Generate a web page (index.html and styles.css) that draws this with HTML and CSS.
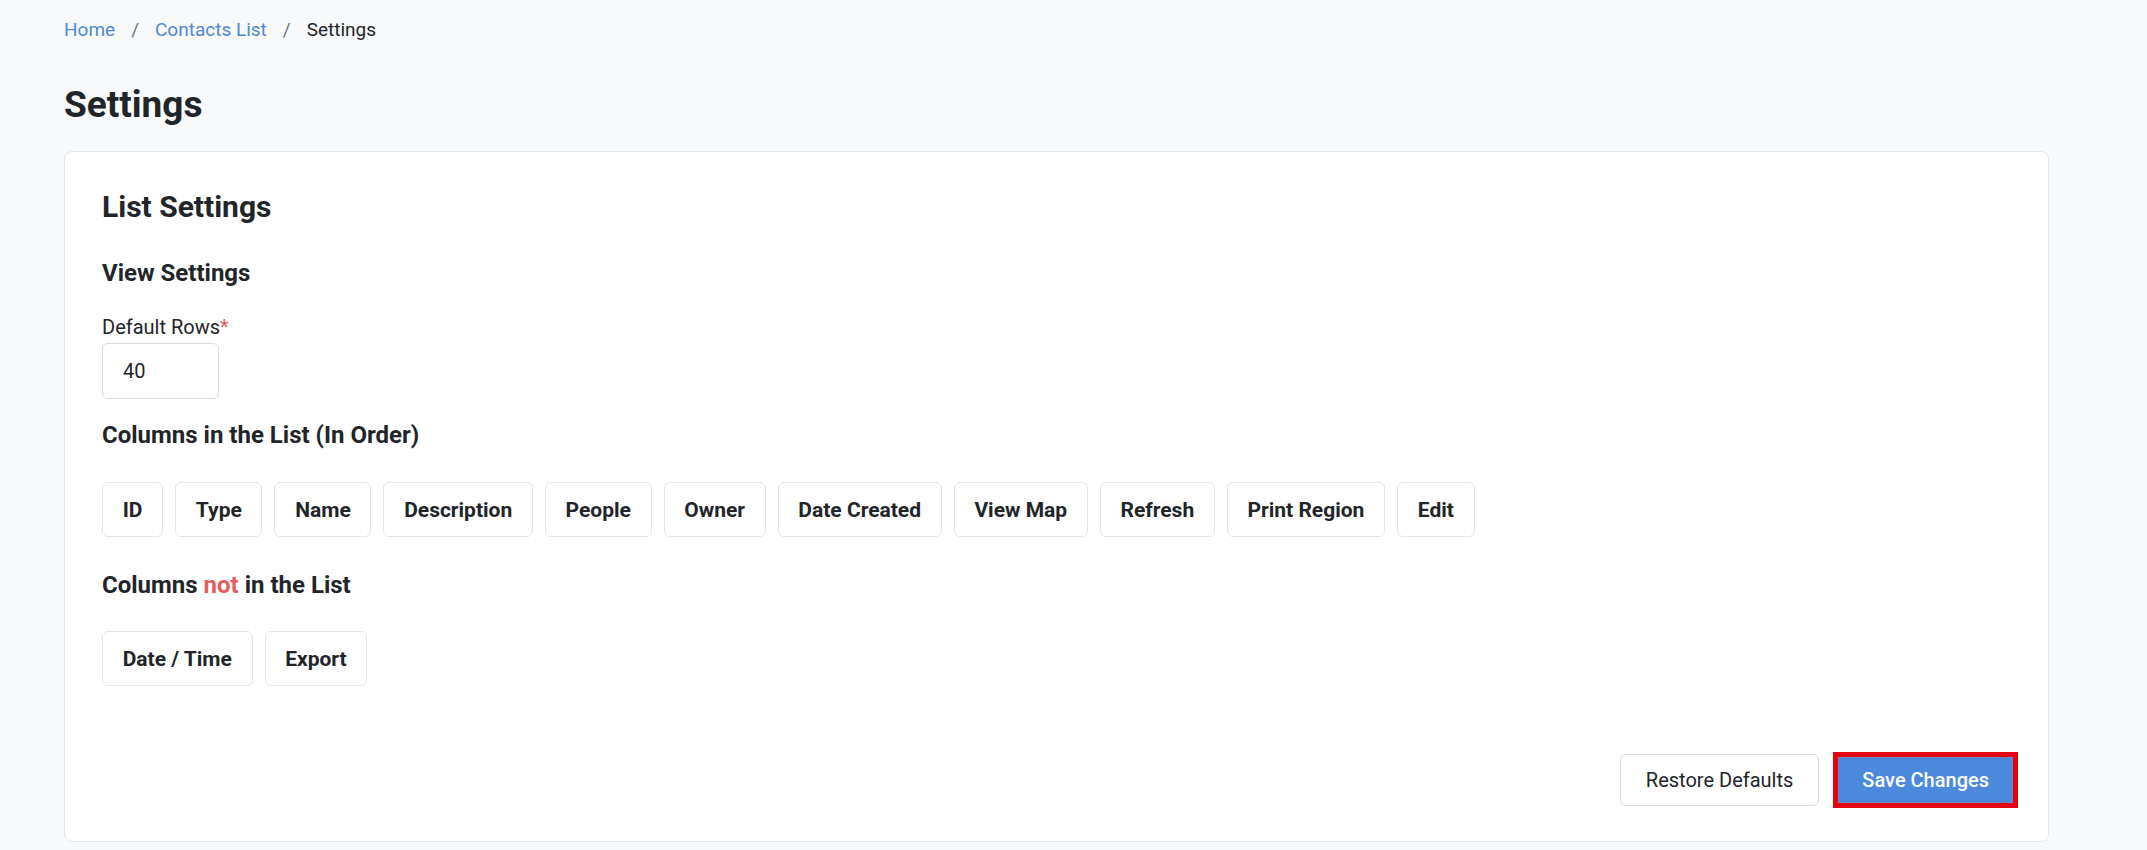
FILE: index.html
```html
<!DOCTYPE html>
<html lang="en">
<head>
    <meta charset="UTF-8">
    <meta name="viewport" content="width=device-width, initial-scale=1.0">
    <title>Settings - Contacts List</title>
    <link rel="stylesheet" href="styles.css">
</head>
<body>
    <div class="page">
        <nav class="breadcrumb">
            <a href="#">Home</a>
            <span class="sep">/</span>
            <a href="#">Contacts List</a>
            <span class="sep">/</span>
            <span class="current">Settings</span>
        </nav>

        <h1 class="page-title">Settings</h1>

        <div class="card">
            <h2 class="card-title">List Settings</h2>

            <h3 class="section-title first">View Settings</h3>
            <label class="field-label" for="rows">Default Rows<span class="required">*</span></label>
            <input class="field-input" id="rows" type="text" value="40">

            <h3 class="section-title">Columns in the List (In Order)</h3>
            <div class="tag-list">
                <span class="tag">ID</span>
                <span class="tag">Type</span>
                <span class="tag">Name</span>
                <span class="tag">Description</span>
                <span class="tag">People</span>
                <span class="tag">Owner</span>
                <span class="tag">Date Created</span>
                <span class="tag">View Map</span>
                <span class="tag">Refresh</span>
                <span class="tag">Print Region</span>
                <span class="tag">Edit</span>
            </div>

            <h3 class="section-title">Columns <span class="not">not</span> in the List</h3>
            <div class="tag-list">
                <span class="tag">Date / Time</span>
                <span class="tag">Export</span>
            </div>

            <div class="card-actions">
                <button class="btn btn-light">Restore Defaults</button>
                <button class="btn btn-primary">Save Changes</button>
            </div>
        </div>
    </div>
</body>
</html>
```

FILE: styles.css
```css
body {
    margin: 0;
    background: #f8f9fb;
    font-family: "Segoe UI", Roboto, "Noto Sans", sans-serif;
    color: #212529;
}
.page {
    padding: 15px 98px 0 64px;
}
.breadcrumb {
    font-size: 19px;
    line-height: 30px;
    display: flex;
}
.breadcrumb a {
    color: #5188d4;
    text-decoration: none;
}
.breadcrumb .sep {
    color: #6c757d;
    padding: 0 16px;
}
.page-title {
    margin: 38px 0 0;
    font-size: 37px;
    line-height: 44px;
    font-weight: 700;
}
.card {
    margin-top: 24px;
    background: white;
    border: 1px solid #e3e6ea;
    border-radius: 8px;
    padding: 37px 30px 33px 37px;
}
.card-title {
    margin: 0;
    font-size: 30px;
    line-height: 36px;
    font-weight: 700;
}
.section-title {
    margin: 22px 0 0;
    font-size: 24px;
    line-height: 29px;
    font-weight: 700;
}
.section-title.first {
    margin-top: 34px;
}
.tag-list + .section-title {
    margin-top: 34px;
}
.not {
    color: #e35d5d;
}
.field-label {
    display: block;
    margin-top: 24px;
    font-size: 20px;
    line-height: 30px;
}
.required {
    color: #e35d5d;
}
.field-input {
    display: block;
    margin-top: 1px;
    width: 117px;
    height: 56px;
    box-sizing: border-box;
    padding: 0 20px;
    border: 1px solid #d6dade;
    border-radius: 6px;
    font-family: inherit;
    font-size: 20px;
    color: #212529;
    background: white;
}
.tag-list {
    display: flex;
    flex-wrap: wrap;
    gap: 12px;
    margin-top: 32px;
}
.tag-list + .section-title + .tag-list {
    margin-top: 31px;
}
.tag {
    display: inline-flex;
    align-items: center;
    height: 55px;
    box-sizing: border-box;
    padding: 0 19.7px;
    border: 1px solid #e2e4e7;
    border-radius: 6px;
    font-size: 21px;
    font-weight: 700;
}
.card-actions {
    display: flex;
    justify-content: flex-end;
    align-items: center;
    gap: 14px;
    margin-top: 66px;
}
.btn {
    font-family: inherit;
    font-size: 20px;
    cursor: pointer;
    box-sizing: border-box;
}
.btn-light {
    height: 52px;
    padding: 0 25px;
    background: white;
    color: #212529;
    border: 1px solid #d6dade;
    border-radius: 6px;
}
.btn-primary {
    height: 56px;
    padding: 0 24px;
    background: #4a89dc;
    color: white;
    font-weight: 500;
    border: 5px solid #e0050f;
    border-radius: 0;
    box-shadow: inset 0 0 0 1px #7382c4;
}
```
